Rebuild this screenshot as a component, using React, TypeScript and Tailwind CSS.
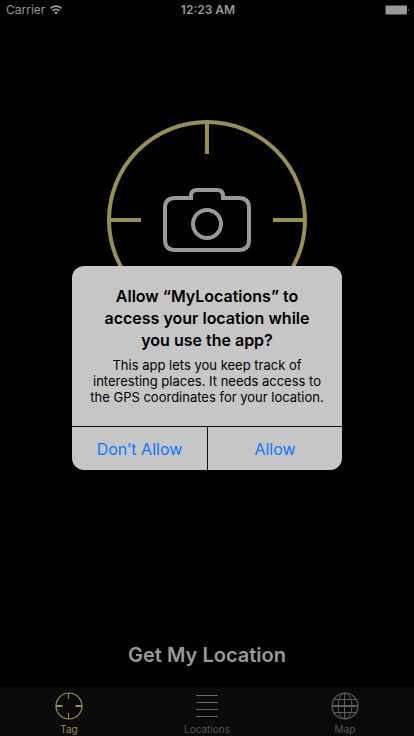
import React from "react";

function WifiIcon() {
  return (
    <svg width="12" height="10" viewBox="0 0 12 10" fill="none" stroke="#999999" strokeWidth="1.8" aria-hidden="true">
      <path d="M0.6 3.4 C3.6 0.4 8.4 0.4 11.4 3.4" />
      <path d="M2.6 5.8 C4.6 3.8 7.4 3.8 9.4 5.8" />
      <path d="M6 9.6 L4 7.6 C5.1 6.6 6.9 6.6 8 7.6 Z" fill="#999999" stroke="none" />
    </svg>
  );
}

function BatteryIcon() {
  return (
    <svg width="25" height="10" viewBox="0 0 25 10" fill="#999999" aria-hidden="true">
      <rect x="0.5" y="0.5" width="21.5" height="9" rx="1" />
      <path d="M23 3.5 Q24.5 5 23 6.5 Z" />
    </svg>
  );
}

function StatusBar() {
  return (
    <header className="grid h-5 grid-cols-3 items-center pr-1 pl-1.5 text-xs text-[#999999]">
      <div className="flex items-center gap-[5px]">
        <span>Carrier</span>
        <WifiIcon />
      </div>
      <span className="text-center font-semibold">12:23 AM</span>
      <div className="flex justify-end">
        <BatteryIcon />
      </div>
    </header>
  );
}

function Logo() {
  return (
    <svg width="200" height="200" viewBox="0 0 200 200" fill="none" strokeWidth="4" aria-hidden="true">
      <g stroke="#9a8f52">
        <circle cx="100" cy="100" r="98" />
        <path d="M100 2V34M100 198V166M2 100H34M198 100H166" />
      </g>
      <g stroke="#999999">
        <path d="M84 80V76Q84 70 90 70H110Q116 70 116 76V80" />
        <path d="M86 78H68Q58 78 58 88V120Q58 130 68 130H132Q142 130 142 120V88Q142 78 132 78H114" />
        <circle cx="100" cy="104" r="14" />
      </g>
    </svg>
  );
}

function TagIcon() {
  return (
    <svg width="28" height="28" viewBox="0 0 28 28" fill="none" stroke="#9a8f52" aria-hidden="true">
      <circle cx="14" cy="14" r="13" strokeWidth="1.2" />
      <path d="M13.5 1V7M13.5 21V27" />
      <path d="M1 14H7.5M20.5 14H27" strokeWidth="2" />
    </svg>
  );
}

function ListIcon() {
  return (
    <svg width="28" height="28" viewBox="0 0 28 28" fill="none" stroke="#666666" aria-hidden="true">
      <path d="M3 3.5H25M3 10.5H25M3 17.5H25M3 24.5H25" />
    </svg>
  );
}

function GlobeIcon() {
  return (
    <svg width="28" height="28" viewBox="0 0 28 28" fill="none" stroke="#5c5c5c" aria-hidden="true">
      <circle cx="14" cy="14" r="13" strokeWidth="1.2" />
      <ellipse cx="14" cy="14" rx="7" ry="13" />
      <path d="M13.5 1V27M3 7.5H25M3 20.5H25" />
      <path d="M1 14H27" strokeWidth="2" />
    </svg>
  );
}

const tabs = [
  { label: "Tag", icon: <TagIcon />, color: "text-[#9a8f52]" },
  { label: "Locations", icon: <ListIcon />, color: "text-[#555555]" },
  { label: "Map", icon: <GlobeIcon />, color: "text-[#555555]" },
];

function TabBar() {
  return (
    <nav className="grid grid-cols-3 bg-[#0a0a0a] pb-0.5">
      {tabs.map((tab) => (
        <a key={tab.label} href="#" className={`flex flex-col items-center gap-1 pt-[5px] text-[10px] leading-[10px] ${tab.color}`}>
          {tab.icon}
          {tab.label}
        </a>
      ))}
    </nav>
  );
}

function PermissionAlert() {
  return (
    <div className="absolute inset-0 flex items-center justify-center">
      <section
        role="alertdialog"
        aria-labelledby="alert-title"
        aria-describedby="alert-message"
        className="w-[270px] overflow-hidden rounded-xl bg-[#c6c6c6] text-center text-black"
      >
        <div className="px-4 pt-[19px] pb-[21px]">
          <h1 id="alert-title" className="text-base leading-[22px] font-semibold">
            Allow “MyLocations” to<br />access your location while<br />you use the app?
          </h1>
          <p id="alert-message" className="mt-1.5 whitespace-nowrap text-[13px] leading-4">
            This app lets you keep track of<br />interesting places. It needs access to<br />the GPS coordinates for your location.
          </p>
        </div>
        <div className="grid grid-cols-2 border-t border-[#111111] text-base text-[#0a7aff]">
          <button type="button" className="h-[43px]">Don’t Allow</button>
          <button type="button" className="h-[43px] border-l border-[#111111]">Allow</button>
        </div>
      </section>
    </div>
  );
}

export default function App() {
  return (
    <div className="relative flex min-h-screen flex-col bg-black font-['Inter',sans-serif]">
      <StatusBar />
      <main className="flex flex-1 flex-col items-center justify-between pt-[100px] pb-4">
        <button type="button" aria-label="Tag location">
          <Logo />
        </button>
        <button type="button" className="text-xl leading-8 font-semibold text-[#999999]">
          Get My Location
        </button>
      </main>
      <TabBar />
      <PermissionAlert />
    </div>
  );
}
